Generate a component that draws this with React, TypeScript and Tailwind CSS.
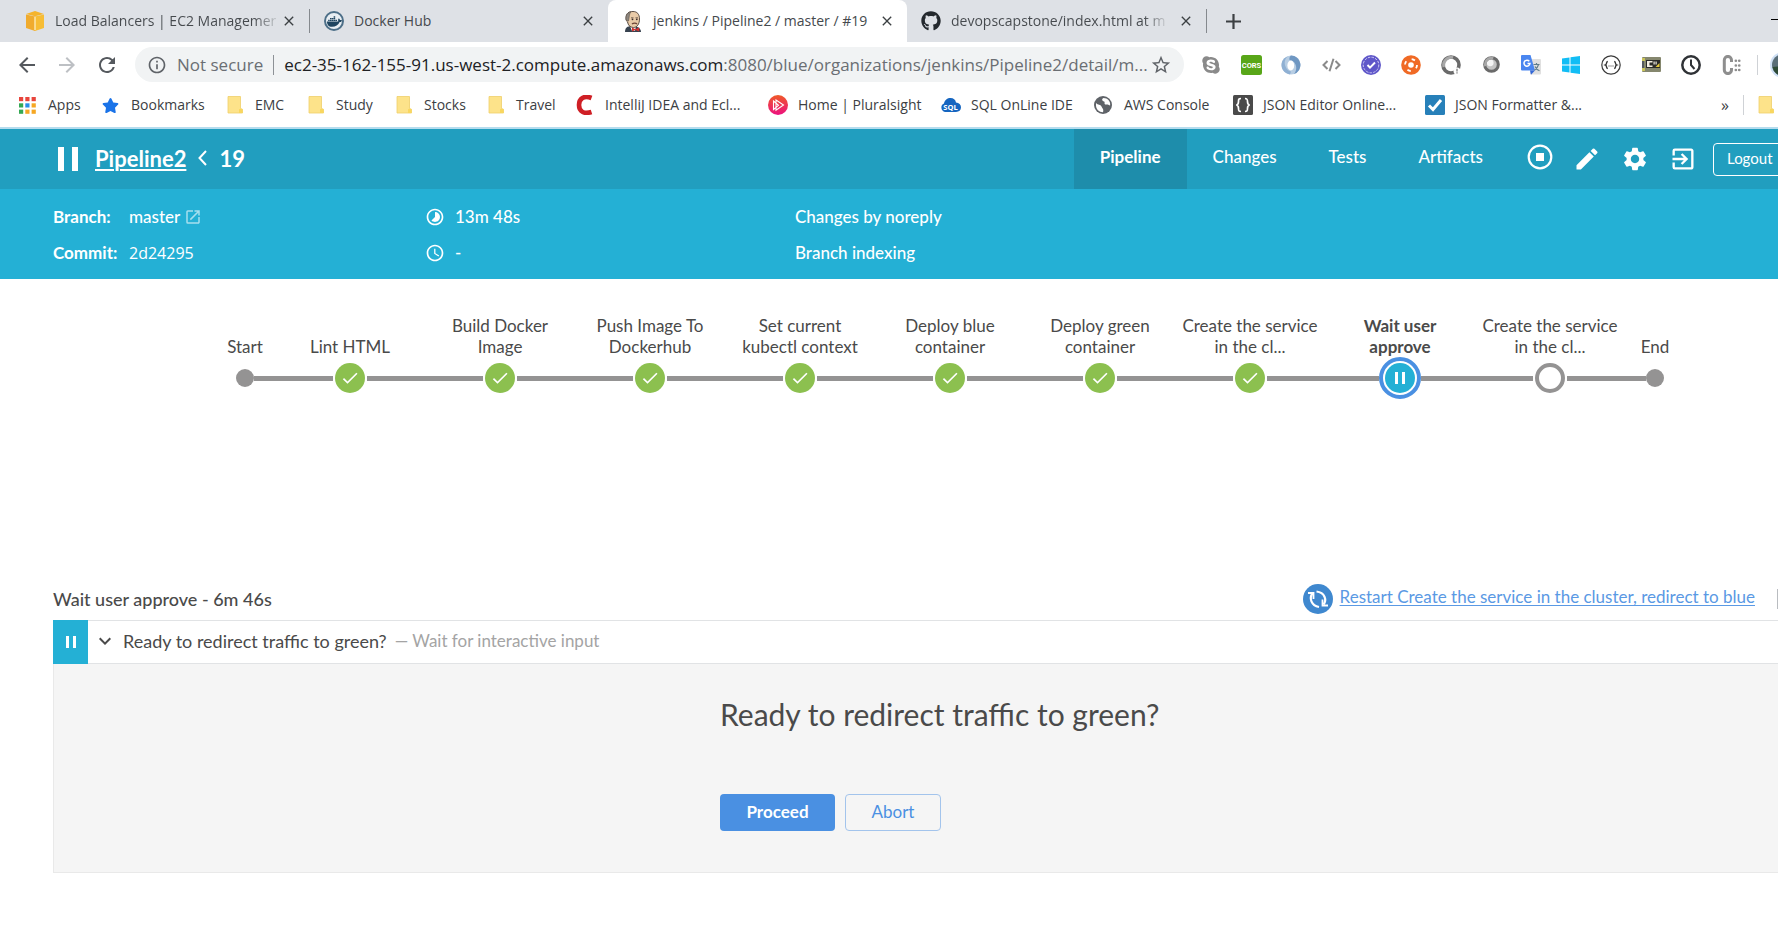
import type { ReactNode } from "react";
import { FaDocker, FaGithub, FaSkype, FaStar } from "react-icons/fa";
import {
  MdAccessTime,
  MdArrowBack,
  MdArrowForward,
  MdCheck,
  MdClose,
  MdEdit,
  MdExitToApp,
  MdInfoOutline,
  MdKeyboardArrowDown,
  MdOpenInNew,
  MdRefresh,
  MdSettings,
  MdStarBorder,
  MdTimelapse,
} from "react-icons/md";

/* ---------- Small drawings ---------- */

function CubeIcon() {
  return (
    <svg width="18" height="20" viewBox="0 0 18 20" aria-hidden="true">
      <path d="M0 3.5 9 5.5V20L0 17Z" fill="#f0ab2e" />
      <path d="M18 3.5 9 5.5V20l9-3Z" fill="#f7bd35" />
      <path d="M0 3 9 0l9 3-9 2.2Z" fill="#f5b42c" />
      <path d="M9 6v13" stroke="#fbe3a6" strokeWidth="1.6" />
    </svg>
  );
}

function DockerIcon() {
  return (
    <span className="flex size-5 items-center justify-center rounded-full border-2 border-[#4d6f88] bg-[#e8eef3]">
      <FaDocker size={15} className="text-[#1f4560]" />
    </span>
  );
}

function JenkinsIcon() {
  return (
    <svg width="18" height="21" viewBox="0 0 18 21" aria-hidden="true">
      <path d="M1 21c0-4 2-6 7-6s9 2 9 6Z" fill="#37424f" />
      <path d="M6 15h6l-1 5H8Z" fill="#fff" />
      <path d="M2 7C2 2 5 .5 9 .5S15.500 3 15.500 8c0 5-2.500 8.500-6 8.500S4 14 3.600 11C2.600 10.500 2 9 2 7Z" fill="#e9cba8" stroke="#4a3d36" strokeWidth=".9" />
      <path d="M2 9C1.600 4 3.500 1.500 7 .8 4.800 3.500 5.500 6 4.500 10Z" fill="#8d8780" stroke="#5b5048" strokeWidth=".6" />
      <path d="M7 6.800h2.500M11.500 6.800H14" stroke="#5b4a40" strokeWidth=".8" />
      <circle cx="8.500" cy="8.300" r=".9" fill="#3a2c28" />
      <circle cx="12.800" cy="8.300" r=".9" fill="#3a2c28" />
      <path d="M8 13c1.500-1.200 4-1.200 5 0" stroke="#6b4436" strokeWidth="1.400" fill="none" />
      <path d="m8 16.500 3.500 1.800 3.700-2v4.200l-3.700-1.500L8 20.500Z" fill="#d0302f" />
    </svg>
  );
}

function AppsIcon() {
  const colors = ["#e8453c", "#e8453c", "#e8453c", "#34a853", "#2b8fe8", "#f6a723", "#34a853", "#f6a723", "#f6a723"];
  return (
    <svg width="17" height="17" viewBox="0 0 17 17" aria-hidden="true">
      {colors.map((c, i) => (
        <rect key={i} x={(i % 3) * 6.3} y={Math.floor(i / 3) * 6.3} width="4.2" height="4.2" fill={c} />
      ))}
    </svg>
  );
}

function FolderIcon() {
  return (
    <svg width="16" height="18" viewBox="0 0 16 18" aria-hidden="true">
      <path d="M1 .5h12.500v12l2 .8V17H1Z" fill="#fde38a" stroke="#efcf6a" strokeWidth=".8" />
      <path d="M12 13.500c0-1 3.500-1 3.500 0V17H12Z" fill="#f9d75f" />
    </svg>
  );
}

function CIcon() {
  return (
    <svg width="17" height="20" viewBox="0 0 17 20" aria-hidden="true">
      <path d="M15.500 3C8 0 3 3.500 3 10s5 9.500 12.500 7" fill="none" stroke="#cf1f25" strokeWidth="4.600" />
    </svg>
  );
}

function PluralsightIcon() {
  return (
    <svg width="20" height="20" viewBox="0 0 20 20" aria-hidden="true">
      <defs>
        <linearGradient id="ps" x1="0" y1="0" x2="0" y2="1">
          <stop offset="0" stopColor="#ef5a28" />
          <stop offset="1" stopColor="#ec1080" />
        </linearGradient>
      </defs>
      <circle cx="10" cy="10" r="10" fill="url(#ps)" />
      <path d="M5.500 6v8.500l5-4.200ZM8 5l7.500 5L8 15.200Z" fill="none" stroke="#fff" strokeWidth="1.100" />
    </svg>
  );
}

function SqlIcon() {
  return (
    <svg width="21" height="14" viewBox="0 0 21 14" aria-hidden="true">
      <path d="M5 14a4.500 4.500 0 0 1-1-8.500C4.500 2 7.500 0 10.500 0S15.500 1.500 16 4.500c3 .2 5 2 5 4.800S19 14 16 14Z" fill="#1565c0" />
      <text x="10.500" y="11.500" textAnchor="middle" fontSize="7.500" fontWeight="700" fill="#fff" className="font-['Open_Sans']">SQL</text>
    </svg>
  );
}

function GlobeIcon() {
  return (
    <svg width="18" height="18" viewBox="0 0 18 18" aria-hidden="true">
      <circle cx="9" cy="9" r="9" fill="#5f6368" />
      <path d="M2 7c2 2.500 4.500 1 5.500 3.500S10 13 9 16.300C5 16.200 2 13 2 9.500ZM9.500 2c-2.500 1-1 3 .5 3.500 1.500.6-.5 2.200 1.500 3 2 .7 4-.3 4.500 1.500C17 5.500 13.500 2 9.500 2Z" fill="#fff" />
    </svg>
  );
}

function BracesIcon() {
  return (
    <svg width="20" height="20" viewBox="0 0 20 20" aria-hidden="true">
      <rect width="20" height="20" rx="1.500" fill="#4a4a4a" />
      <path d="M8 3.500c-2.500 0-2.500 1-2.500 3S5.300 9.700 3.300 10c2 .3 2.200 1.500 2.200 3.500s0 3 2.500 3M12 3.500c2.500 0 2.500 1 2.500 3s.2 3.200 2.200 3.500c-2 .3-2.200 1.500-2.200 3.500s0 3-2.500 3" fill="none" stroke="#fff" strokeWidth="1.700" />
    </svg>
  );
}

function TickBoxIcon() {
  return (
    <svg width="20" height="20" viewBox="0 0 20 20" aria-hidden="true">
      <rect width="20" height="20" rx="1.500" fill="#2780b9" />
      <path d="m4 10.500 4 4L16 5" fill="none" stroke="#fff" strokeWidth="3" />
    </svg>
  );
}

function CorsIcon() {
  return (
    <svg width="21" height="20" viewBox="0 0 21 20" aria-hidden="true">
      <rect width="21" height="20" rx="2.500" fill="#58a618" />
      <text x="10.500" y="13.200" textAnchor="middle" fontSize="7.500" fontWeight="700" fill="#fff" className="font-['Roboto']">CORS</text>
    </svg>
  );
}

function SwirlIcon() {
  return (
    <svg width="20" height="20" viewBox="0 0 20 20" aria-hidden="true">
      <ellipse cx="10" cy="10" rx="9.500" ry="9.500" fill="#b7cde3" />
      <path d="M10 .5A9.500 9.500 0 0 1 13 19c2-2.500 3-6 1.500-9.500C13.500 7 11.500 5.500 9 5.500c-1.500-2 0-4 1-5Z" fill="#6f97c2" />
      <path d="M7 1.500C4 3 2.500 8 5 12.500c1 2 2.500 3.500 5 4l-1 3C3 18 .5 14 .5 10S3 2.500 7 1.500Z" fill="#8fb0d3" />
      <ellipse cx="9.800" cy="10.500" rx="3.400" ry="5" fill="#fff" />
    </svg>
  );
}

function CodeIcon() {
  return (
    <svg width="19" height="14" viewBox="0 0 19 14" aria-hidden="true">
      <path d="M5.500 3 1.500 7l4 4M13.500 3l4 4-4 4M11.500.8 7.500 13.200" fill="none" stroke="#8a8a8a" strokeWidth="2" />
    </svg>
  );
}

function SealIcon() {
  return (
    <svg width="20" height="20" viewBox="0 0 20 20" aria-hidden="true">
      <circle cx="10" cy="10" r="10" fill="#5f57c9" />
      <circle cx="10" cy="10" r="7.800" fill="none" stroke="#cfcbf3" strokeWidth="1" strokeDasharray="2.500 1.200" />
      <path d="m6.500 10 2.500 2.700L14 7.500" fill="none" stroke="#fff" strokeWidth="1.900" />
    </svg>
  );
}

function BuoyIcon() {
  return (
    <svg width="20" height="20" viewBox="0 0 20 20" aria-hidden="true">
      <circle cx="10" cy="10" r="9.800" fill="#f06a25" />
      <circle cx="10" cy="10" r="6" fill="none" stroke="#fff" strokeWidth="1.800" strokeDasharray="3.500 5.920" />
      <circle cx="10" cy="10" r="2.800" fill="#fff" />
    </svg>
  );
}

function LensIcon({ badge }: { badge?: boolean }) {
  return (
    <svg width={badge ? 20 : 17} height={badge ? 20 : 17} viewBox="0 0 20 20" aria-hidden="true">
      {!badge && <circle cx="10" cy="10" r="8" fill="#c4c4c4" />}
      {!badge && <circle cx="8.500" cy="8" r="4" fill="#f4f4f4" />}
      <circle cx="10" cy="10" r="8" fill="none" stroke="#6a6a6a" strokeWidth="3.600" />
      <path d="M3 12A7.500 7.500 0 0 1 12 2.600" fill="none" stroke="#a8a8a8" strokeWidth="3" />
      {badge && <circle cx="16" cy="16" r="3.500" fill="#fff" />}
      {badge && <path d="M16 13.800v2.600M16 17.300v1.200" stroke="#888" strokeWidth="1.400" />}
    </svg>
  );
}

function TranslateIcon() {
  return (
    <svg width="20" height="20" viewBox="0 0 20 20" aria-hidden="true">
      <rect x="9" y="4" width="11" height="15.500" rx="1" fill="#e0e0e0" />
      <path d="M0 1Q0 0 1 0h8.500l4.500 15.500H1q-1 0-1-1Z" fill="#4a86f0" />
      <path d="m9 15.500 5 0-4 4.300Z" fill="#3367d6" />
      <path d="M8.300 6.200A3 3 0 1 0 9 8.500H6.500" fill="none" stroke="#fff" strokeWidth="1.500" />
      <path d="M12.500 9.500h6M15.500 8v1.500M17.500 9.700c-.8 3-2.300 4.500-4 5.500M14 11.500c1 2 2.500 3.500 4.500 4.300" fill="none" stroke="#607d8b" strokeWidth="1.200" />
    </svg>
  );
}

function WindowsIcon() {
  return (
    <svg width="18" height="18" viewBox="0 0 18 18" aria-hidden="true">
      <path d="M0 2.600 7.500 1.400V8.500H0ZM8.500 1.200 18 0v8.500H8.500ZM0 9.500h7.500v7.100L0 15.400ZM8.500 9.500H18V18l-9.500-1.200Z" fill="#12bdf5" />
    </svg>
  );
}

function RoundBracesIcon() {
  return (
    <svg width="20" height="20" viewBox="0 0 20 20" aria-hidden="true">
      <circle cx="10" cy="10" r="9.200" fill="#fff" stroke="#3a3a3a" strokeWidth="1.200" />
      <path d="M6.800 6.500C5 6.500 6 9.500 4.500 10c1.500.5.5 3.500 2.300 3.500M13.200 6.500c1.800 0 .8 3 2.300 3.500-1.500.5-.5 3.500-2.300 3.500" fill="none" stroke="#333" strokeWidth="1.400" />
      <path d="M7.500 11h5" stroke="#333" strokeWidth="1.200" strokeDasharray="1 1" />
    </svg>
  );
}

function BadgeIcon() {
  return (
    <svg width="19" height="15" viewBox="0 0 19 15" aria-hidden="true">
      <rect width="19" height="15" rx="1" fill="#85876e" />
      <rect x="4" y="3" width="14" height="8" fill="#2a2a28" />
      <path d="M5 4h5.500v1.500H7.500v3h3V10H5ZM11.500 4.500h1.200v3h-1.200ZM13.500 4.500h1.200v3h-1.200Z" fill="#f3eee2" />
      <path d="m13.500 10 4-4v4Z" fill="#e6c93b" />
      <path d="M0 1h3v3H0ZM0 11h3v3H0Z" fill="#c9c35a" />
      <path d="M1 4v7" stroke="#454a5a" strokeWidth="1.500" />
    </svg>
  );
}

function ClockIcon() {
  return (
    <svg width="20" height="20" viewBox="0 0 20 20" aria-hidden="true">
      <circle cx="10" cy="10" r="8.700" fill="none" stroke="#2f3236" strokeWidth="2.500" />
      <path d="M10 4.500V10l3.500 4" fill="none" stroke="#2f3236" strokeWidth="2" />
    </svg>
  );
}

function ColonIcon() {
  return (
    <svg width="19" height="20" viewBox="0 0 19 20" aria-hidden="true">
      <path d="M9.500 7V5A3.500 3.500 0 0 0 2.300 5V15a3.500 3.500 0 0 0 7.200 0V13" fill="none" stroke="#8e8e8e" strokeWidth="3" />
      <path d="M13.800 5.800h.1M13.800 10.500h.1M13.800 15h.1M17.200 5.800h.1M17.200 10.500h.1M17.200 15h.1" stroke="#8e8e8e" strokeWidth="2.600" strokeLinecap="round" />
    </svg>
  );
}

function AvatarIcon() {
  return (
    <svg width="26" height="26" viewBox="0 0 26 26" aria-hidden="true">
      <circle cx="13" cy="13" r="13" fill="#cfe0f5" />
      <circle cx="13" cy="13" r="11" fill="#5a6e78" />
      <path d="M2.500 15 13 14v10A11 11 0 0 1 2.500 15Z" fill="#2d4a35" />
    </svg>
  );
}

function StopIcon() {
  return (
    <svg width="26" height="26" viewBox="0 0 26 26" aria-hidden="true">
      <circle cx="13" cy="13" r="11.300" fill="none" stroke="#fff" strokeWidth="2.200" />
      <rect x="9" y="9" width="8" height="8" fill="#fff" />
    </svg>
  );
}

function PauseBars({ size }: { size: "lg" | "sm" }) {
  return size === "lg" ? (
    <svg width="20" height="24" viewBox="0 0 20 24" aria-hidden="true">
      <path d="M0 0h6v24H0ZM14 0h6v24h-6Z" fill="#fff" />
    </svg>
  ) : (
    <svg width="10" height="12" viewBox="0 0 10 12" aria-hidden="true">
      <path d="M0 0h3v12H0ZM7 0h3v12H7Z" fill="#fff" />
    </svg>
  );
}

function RestartIcon() {
  return (
    <svg width="30" height="30" viewBox="0 0 30 30" className="shrink-0" aria-hidden="true">
      <circle cx="15" cy="15" r="15" fill="#3f88cf" />
      <path d="M9.500 9.500C6 14 8 21.500 16 23M20.500 20.500C24 16 22 8.500 13.500 7.500" fill="none" stroke="#fff" strokeWidth="2.200" />
      <path d="M5 9h5.500v6M25 21.500h-5.500v-6" fill="none" stroke="#fff" strokeWidth="1.800" />
    </svg>
  );
}

/* ---------- Browser chrome ---------- */

function Tab({ icon, title, active, faded, spacing }: { icon: ReactNode; title: string; active?: boolean; faded?: boolean; spacing: string }) {
  return (
    <div className={`flex h-full shrink-0 items-center pr-3 ${spacing} ${active ? "rounded-t-lg bg-white" : ""}`}>
      <a href="#tab" className="flex flex-1 items-center gap-2.5">
        <span className="flex w-5 shrink-0 justify-center">{icon}</span>
        <span
          className={`whitespace-nowrap ${faded ? "bg-gradient-to-r from-[#45494d] from-90% to-[#c4c7cb] bg-clip-text text-transparent" : ""}`}
        >
          {title}
        </span>
      </a>
      <button type="button" aria-label="Close tab" className="text-[#3c4043]">
        <MdClose size={16} />
      </button>
    </div>
  );
}

function TabDivider() {
  return <span className="h-6 w-px shrink-0 bg-[#85898e]" />;
}

function TabStrip() {
  return (
    <div className="flex h-[42px] items-center bg-[#dee1e6] text-sm text-[#45494d]">
      <Tab icon={<CubeIcon />} title="Load Balancers | EC2 Managemer" faded spacing="w-[309px] pl-[25px]" />
      <TabDivider />
      <Tab icon={<DockerIcon />} title="Docker Hub" spacing="w-[298px] pl-[14px]" />
      <Tab icon={<JenkinsIcon />} title="jenkins / Pipeline2 / master / #19" active spacing="w-[299px] pl-[15px]" />
      <Tab icon={<FaGithub size={20} className="text-[#24292e]" />} title="devopscapstone/index.html at m" faded spacing="w-[299px] pl-[14px]" />
      <TabDivider />
      <button type="button" aria-label="New tab" className="ml-[19px]">
        <svg width="15" height="15" viewBox="0 0 15 15" aria-hidden="true">
          <path d="M7.500 0v15M0 7.500h15" stroke="#3c4043" strokeWidth="2.200" />
        </svg>
      </button>
      <button type="button" aria-label="Minimize" className="ml-auto flex h-[34px] w-[7px] items-center overflow-hidden pb-1">
        <span className="h-px w-3 shrink-0 bg-black" />
      </button>
    </div>
  );
}

const extensions: { name: string; icon: ReactNode }[] = [
  { name: "Skype", icon: <FaSkype size={20} className="text-[#8a8a8a]" /> },
  { name: "CORS", icon: <CorsIcon /> },
  { name: "Swirl", icon: <SwirlIcon /> },
  { name: "Code", icon: <CodeIcon /> },
  { name: "Verified", icon: <SealIcon /> },
  { name: "Help", icon: <BuoyIcon /> },
  { name: "Lens alert", icon: <LensIcon badge /> },
  { name: "Lens", icon: <LensIcon /> },
  { name: "Translate", icon: <TranslateIcon /> },
  { name: "Windows", icon: <WindowsIcon /> },
  { name: "JSON", icon: <RoundBracesIcon /> },
  { name: "Badge", icon: <BadgeIcon /> },
  { name: "Clock", icon: <ClockIcon /> },
  { name: "Colon", icon: <ColonIcon /> },
];

function Toolbar() {
  return (
    <div className="flex h-[45px] items-center">
      <div className="flex w-[135px] shrink-0 items-center gap-4 pl-[15px]">
        <button type="button" aria-label="Back" className="text-[#55595e]"><MdArrowBack size={24} /></button>
        <button type="button" aria-label="Forward" className="text-[#bdc0c4]"><MdArrowForward size={24} /></button>
        <button type="button" aria-label="Reload" className="text-[#55595e]"><MdRefresh size={24} /></button>
      </div>
      <div className="flex h-[35px] min-w-0 flex-1 items-center rounded-full bg-[#f1f3f4] px-3 text-[17px]">
        <MdInfoOutline size={20} className="shrink-0 text-[#5f6368]" />
        <span className="ml-2.5 shrink-0 text-[#6a6e73]">Not secure</span>
        <span className="mx-2.5 h-5 w-px shrink-0 bg-[#8d9196]" />
        <span className="min-w-0 flex-1 whitespace-nowrap text-[#6a6e73]">
          <span className="text-[#202124]">ec2-35-162-155-91.us-west-2.compute.amazonaws.com</span>
          :8080/blue/organizations/jenkins/Pipeline2/detail/m...
        </span>
        <button type="button" aria-label="Bookmark this page" className="shrink-0 text-[#5f6368]"><MdStarBorder size={22} /></button>
      </div>
      <div className="flex shrink-0 items-center pl-[7px]">
        {extensions.map((e) => (
          <button key={e.name} type="button" aria-label={e.name} className="flex w-10 justify-center">{e.icon}</button>
        ))}
        <span className="ml-1.5 h-5 w-px bg-[#cfd2d6]" />
        <button type="button" aria-label="Profile" className="ml-3 w-2 overflow-hidden"><span className="block w-[26px]"><AvatarIcon /></span></button>
      </div>
    </div>
  );
}

const bookmarks: { label: string; icon: ReactNode; width: string }[] = [
  { label: "Apps", icon: <AppsIcon />, width: "w-[83px] gap-3" },
  { label: "Bookmarks", icon: <FaStar size={17} className="text-[#1a73e8]" />, width: "w-[125px] gap-3" },
  { label: "EMC", icon: <FolderIcon />, width: "w-[81px] gap-3" },
  { label: "Study", icon: <FolderIcon />, width: "w-[88px] gap-3" },
  { label: "Stocks", icon: <FolderIcon />, width: "w-[92px] gap-3" },
  { label: "Travel", icon: <FolderIcon />, width: "w-[88px] gap-3" },
  { label: "IntelliJ IDEA and Ecl...", icon: <CIcon />, width: "w-[192px] gap-3" },
  { label: "Home | Pluralsight", icon: <PluralsightIcon />, width: "w-[172px] gap-2.5" },
  { label: "SQL OnLine IDE", icon: <SqlIcon />, width: "w-[154px] gap-2.5" },
  { label: "AWS Console", icon: <GlobeIcon />, width: "w-[139px] gap-3" },
  { label: "JSON Editor Online...", icon: <BracesIcon />, width: "w-[192px] gap-2.5" },
  { label: "JSON Formatter &...", icon: <TickBoxIcon />, width: "w-[170px] gap-2.5" },
];

function BookmarksBar() {
  return (
    <nav aria-label="Bookmarks" className="flex h-10 items-center pb-1 pl-[19px] text-sm text-[#3c4043]">
      {bookmarks.map((b) => (
        <a key={b.label} href="#bookmark" className={`flex shrink-0 items-center whitespace-nowrap ${b.width}`}>
          <span className="flex shrink-0">{b.icon}</span>
          {b.label}
        </a>
      ))}
      <button type="button" aria-label="More bookmarks" className="ml-auto text-base">»</button>
      <span className="ml-3.5 h-5 w-px bg-[#cfd2d6]" />
      <span className="ml-3.5 mr-1 flex"><FolderIcon /></span>
    </nav>
  );
}

/* ---------- Pipeline page ---------- */

const views = [
  { label: "Pipeline", active: true },
  { label: "Changes" },
  { label: "Tests" },
  { label: "Artifacts" },
];

function RunHeader() {
  return (
    <header className="text-white">
      <div className="flex h-[60px] items-center bg-[#219ebf] pl-[58px]">
        <PauseBars size="lg" />
        <h1 className="ml-[17px] flex items-center pb-0.5 text-[22px] font-bold">
          <a href="#pipeline" className="underline decoration-2 underline-offset-2">Pipeline2</a>
          <svg width="9" height="16" viewBox="0 0 9 16" className="mx-3" aria-hidden="true">
            <path d="M8 1 1.500 8 8 15" fill="none" stroke="#fff" strokeWidth="2" />
          </svg>
          19
        </h1>
        <nav aria-label="Run views" className="ml-auto flex h-full text-[17px]">
          {views.map((v) => (
            <a key={v.label} href="#view" className={`flex h-full items-center px-[26px] pb-1 ${v.active ? "bg-[#1e8dab] font-bold" : "font-medium"}`}>
              {v.label}
            </a>
          ))}
        </nav>
        <div className="ml-[18px] flex shrink-0 items-center gap-5">
          <button type="button" aria-label="Stop" className="pb-1"><StopIcon /></button>
          <button type="button" aria-label="Edit"><MdEdit size={28} /></button>
          <button type="button" aria-label="Settings"><MdSettings size={28} /></button>
          <button type="button" aria-label="Exit"><MdExitToApp size={28} /></button>
        </div>
        <div className="ml-4 w-[65px] shrink-0 overflow-hidden">
          <button type="button" className="h-[33px] w-20 rounded border border-white pb-0.5 pl-[13px] text-left text-[15px]">Logout</button>
        </div>
      </div>
      <div className="grid h-[90px] grid-cols-[372px_370px_1fr] items-center bg-[#24b0d5] pb-2 pl-[53px] pt-2.5 text-[17px] font-medium">
        <div className="flex items-center">
          <span className="w-[76px] font-bold">Branch:</span>
          <a href="#branch" className="flex items-center gap-1">master <MdOpenInNew size={18} className="text-white/60" /></a>
        </div>
        <div className="flex items-center gap-2.5"><MdTimelapse size={20} />13m 48s</div>
        <div>Changes by noreply</div>
        <div className="flex items-center">
          <span className="w-[76px] font-bold">Commit:</span>
          <span className="font-['Open_Sans'] text-base font-normal">2d24295</span>
        </div>
        <div className="flex items-center gap-2.5"><MdAccessTime size={20} />-</div>
        <div>Branch indexing</div>
      </div>
    </header>
  );
}

type Stage = { label: string[]; kind: "start" | "done" | "paused" | "todo" | "end" };

const stages: Stage[] = [
  { label: ["Start"], kind: "start" },
  { label: ["Lint HTML"], kind: "done" },
  { label: ["Build Docker", "Image"], kind: "done" },
  { label: ["Push Image To", "Dockerhub"], kind: "done" },
  { label: ["Set current", "kubectl context"], kind: "done" },
  { label: ["Deploy blue", "container"], kind: "done" },
  { label: ["Deploy green", "container"], kind: "done" },
  { label: ["Create the service", "in the cl..."], kind: "done" },
  { label: ["Wait user", "approve"], kind: "paused" },
  { label: ["Create the service", "in the cl..."], kind: "todo" },
  { label: ["End"], kind: "end" },
];

function StageNode({ kind }: { kind: Stage["kind"] }) {
  if (kind === "start" || kind === "end") return <span className="size-[18px] shrink-0 rounded-full bg-[#949393]" />;
  if (kind === "done")
    return (
      <span className="mx-0.5 flex size-[30px] shrink-0 items-center justify-center rounded-full bg-[#8cc04f]">
        <MdCheck size={20} className="text-white" />
      </span>
    );
  if (kind === "paused")
    return (
      <span className="flex size-[42px] shrink-0 items-center justify-center rounded-full border-4 border-[#4a90e2] bg-white">
        <span className="flex size-[30px] items-center justify-center rounded-full bg-[#24b0d5]"><PauseBars size="sm" /></span>
      </span>
    );
  return <span className="mx-0.5 size-[30px] shrink-0 rounded-full border-4 border-[#949393] bg-white" />;
}

function PipelineGraph() {
  return (
    <ol className="flex pl-[215px] pt-9 text-[17px] leading-[21px] text-[#4a4a4a]">
      {stages.map((s, i) => (
        <li key={i} className={`flex shrink-0 flex-col ${s.kind === "start" || s.kind === "end" ? "w-[60px]" : "w-[150px]"}`}>
          <div className={`flex h-[42px] flex-col justify-end whitespace-nowrap text-center ${s.kind === "paused" ? "font-bold" : ""}`}>
            {s.label.map((l) => (
              <span key={l}>{l}</span>
            ))}
          </div>
          <div className="flex h-[42px] items-center">
            <span className={`h-[5px] flex-1 ${s.kind === "start" ? "" : "bg-[#949393]"}`} />
            <StageNode kind={s.kind} />
            <span className={`h-[5px] flex-1 ${s.kind === "end" ? "" : "bg-[#949393]"}`} />
          </div>
        </li>
      ))}
    </ol>
  );
}

function StepLog() {
  return (
    <section className="mt-[179px] pl-[53px] text-[17px] text-[#4a4a4a]">
      <div className="flex h-[42px] items-center justify-between">
        <h2 className="text-lg font-medium">Wait user approve - 6m 46s</h2>
        <div className="flex items-center">
          <a href="#restart" className="flex items-center gap-[7px] text-[#5a99e4]">
            <RestartIcon />
            <span className="pb-1 underline underline-offset-2">Restart Create the service in the cluster, redirect to blue</span>
          </a>
          <span className="ml-[22px] h-5 w-px bg-[#b9bcc0]" />
        </div>
      </div>
      <div className="flex h-11 items-stretch">
        <span className="flex w-[35px] items-center justify-center bg-[#24b0d5]"><PauseBars size="sm" /></span>
        <button type="button" aria-expanded="true" className="flex flex-1 items-center border-y border-[#e1e3e5] pb-0.5 pl-[5px] text-left">
          <MdKeyboardArrowDown size={24} />
          <span className="ml-1.5 text-lg">Ready to redirect traffic to green?</span>
          <span className="ml-2 text-[#a4a4a4]">— Wait for interactive input</span>
        </button>
      </div>
      <div className="border-b border-l border-[#e9e9e9] bg-[#f5f5f5] pb-[41px] pl-[666px] pt-[30px]">
        <h3 className="text-[30px] leading-10">Ready to redirect traffic to green?</h3>
        <div className="mt-[60px] flex gap-2.5">
          <button type="button" className="h-[37px] w-[115px] rounded bg-[#4a90e2] pb-0.5 font-bold text-white">Proceed</button>
          <button type="button" className="h-[37px] w-24 rounded border border-[#a3c4ec] pb-0.5 text-[#4a90e2]">Abort</button>
        </div>
      </div>
    </section>
  );
}

export default function App() {
  return (
    <div className="min-h-screen overflow-hidden bg-white">
      <div className="font-['Open_Sans',sans-serif]">
        <TabStrip />
        <Toolbar />
        <BookmarksBar />
      </div>
      <main className="border-t-2 border-[#b5dcee] font-[Lato,sans-serif]">
        <RunHeader />
        <PipelineGraph />
        <StepLog />
      </main>
    </div>
  );
}
